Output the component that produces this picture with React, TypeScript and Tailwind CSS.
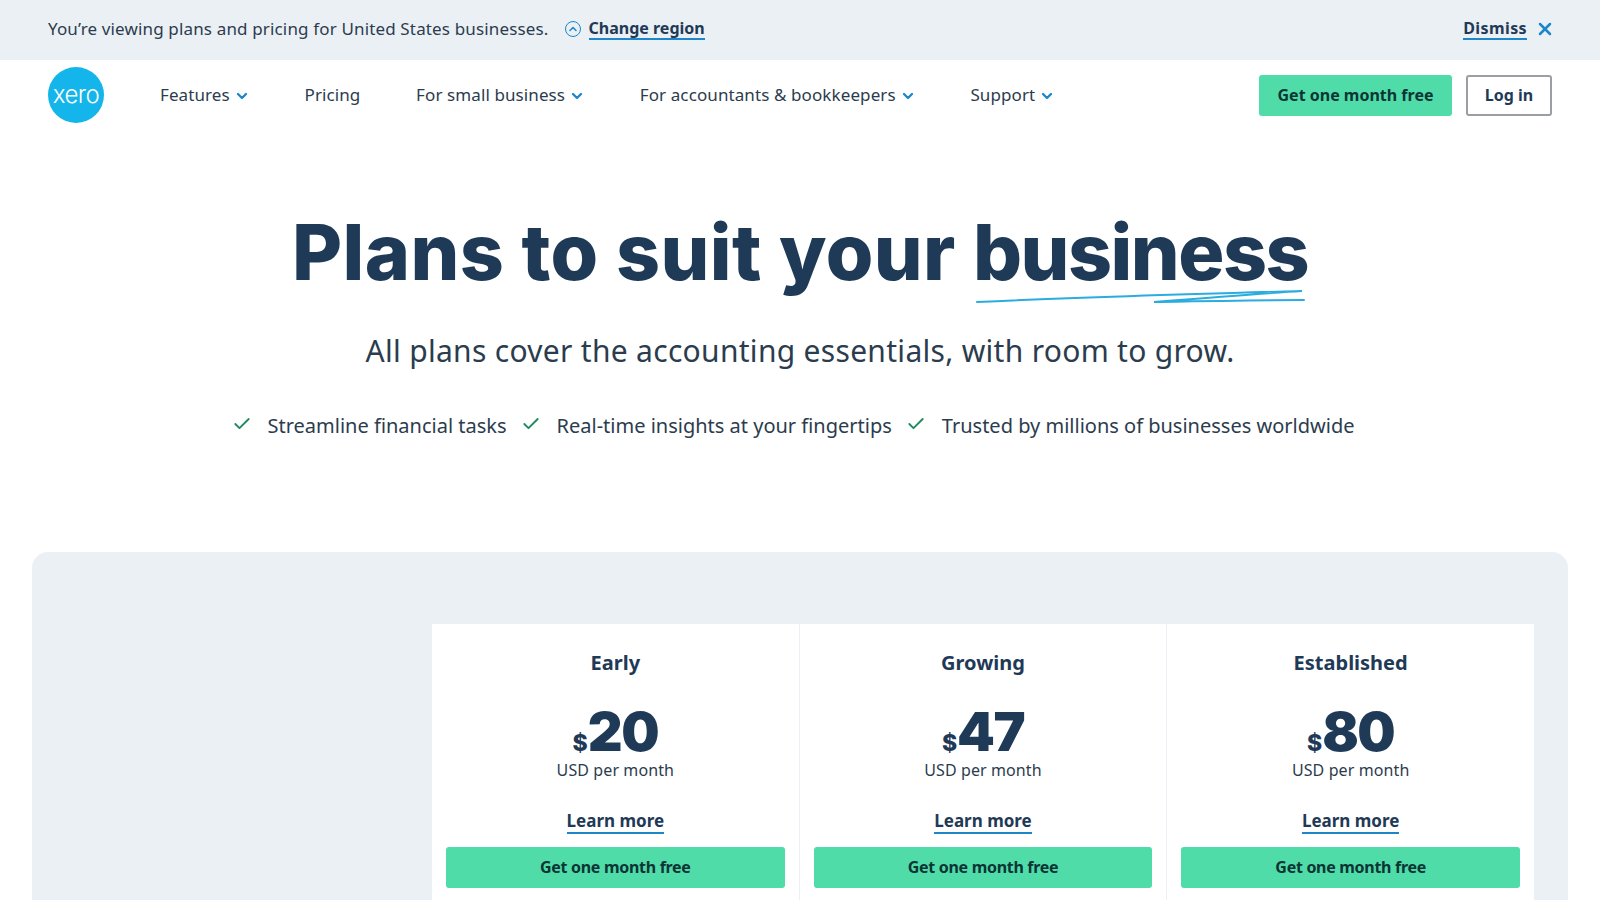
import { ChevronDown, ChevronUp, Check, X } from "lucide-react";

const navItems = [
  { label: "Features", menu: true },
  { label: "Pricing", menu: false },
  { label: "For small business", menu: true },
  { label: "For accountants & bookkeepers", menu: true },
  { label: "Support", menu: true },
];

const perks = [
  "Streamline financial tasks",
  "Real-time insights at your fingertips",
  "Trusted by millions of businesses worldwide",
];

const plans = [
  { name: "Early", price: "20" },
  { name: "Growing", price: "47" },
  { name: "Established", price: "80" },
];

const Underlined = ({ children }: { children: string }) => (
  <a className="font-bold text-[#1f3a57] border-b-2 border-[#1c86c8] leading-[19px]">{children}</a>
);

const App = () => {
  return (
    <div className="h-screen overflow-hidden bg-white text-[#2b3c4e] font-['Noto_Sans',sans-serif] flex flex-col">
      {/* Region banner */}
      <div className="h-[60px] shrink-0 bg-[#ebf0f5] px-[48px] pb-[2px] flex items-center justify-between text-[16px]">
        <div className="flex items-center">
          <span className="text-[17px] tracking-[0.15px]">You’re viewing plans and pricing for United States businesses.</span>
          <span className="ml-[16px] mr-2 w-4 h-4 rounded-full border-[1.5px] border-[#1c86c8] flex items-center justify-center">
            <ChevronUp size={12} strokeWidth={3} className="text-[#1c86c8]" />
          </span>
          <Underlined>Change region</Underlined>
        </div>
        <div className="flex items-center gap-2 tracking-[0.4px]">
          <Underlined>Dismiss</Underlined>
          <X size={20} strokeWidth={3} className="text-[#1c86c8] -mr-[3px]" />
        </div>
      </div>

      {/* Nav */}
      <div className="h-[71px] shrink-0 px-[48px] flex items-start justify-between">
        <div className="flex items-center h-[71px]">
          <div className="w-[56px] h-[56px] -mt-[1px] rounded-full bg-[#13b5ea] flex items-center justify-center text-white text-[24px] font-light font-['Inter',sans-serif] tracking-[-0.5px]">
            xero
          </div>
          <div className="flex items-center gap-[55.7px] ml-[56px] pb-[2px] text-[17px] tracking-[0.1px]">
            {navItems.map((item) => (
              <div key={item.label} className="flex items-center gap-[4px]">
                <span>{item.label}</span>
                {item.menu && <ChevronDown size={16} strokeWidth={3.5} className="text-[#1c86c8] mt-[3px] -mr-[1px]" />}
              </div>
            ))}
          </div>
        </div>
        <div className="flex items-center gap-[14px] h-[71px] text-[16px] font-bold">
          <button className="w-[193px] h-[41px] pb-[2px] rounded-[3px] bg-[#50dca9] text-[#0b3534]">Get one month free</button>
          <button className="w-[86px] h-[41px] pb-[2px] rounded-[3px] border-2 border-[#9b9fa4] text-[#1f3a57]">Log in</button>
        </div>
      </div>

      {/* Hero */}
      <div className="flex flex-col items-center">
        <h1 className="mt-[76px] text-[77px] leading-[90px] font-extrabold tracking-[0.4px] text-[#1f3a57] font-['Inter',sans-serif] relative">
          Plans to suit your{" "}
          <span className="relative tracking-[-1.55px]">
            business
            <svg
              className="absolute left-[3px] top-[85px]"
              width="330"
              height="14"
              viewBox="0 0 330 14"
              fill="none"
              stroke="#2bacdf"
              strokeLinecap="round"
            >
              <path d="M1 12 C 110 7, 220 4, 326 1 C 290 3, 215 9, 178 12 C 230 11, 280 10, 328 10" strokeWidth="2" />
            </svg>
          </span>
        </h1>
        <p className="mt-[34px] text-[30px] leading-[40px] tracking-[0.3px]">
          All plans cover the accounting essentials, with room to grow.
        </p>
        <div className="mt-[41px] flex items-center text-[20px] leading-[28px]">
          {perks.map((perk) => (
            <div key={perk} className="flex items-center mr-[14px]">
              <Check size={20} strokeWidth={2.25} className="text-[#1f8a5f] mr-[16px] -mt-1" />
              <span>{perk}</span>
            </div>
          ))}
        </div>
      </div>

      {/* Plans panel */}
      <div className="mt-[112px] mx-[32px] flex-1 rounded-t-[16px] bg-[#ebf0f5] pt-[72px] pl-[400px] pr-[34px]">
        <div className="grid grid-cols-3 gap-px h-full">
          {plans.map((plan) => (
            <div key={plan.name} className="bg-white px-[14px] pt-[25px] flex flex-col items-center">
              <div className="text-[20px] leading-[28px] font-bold text-[#1f3a57]">{plan.name}</div>
              <div className="mt-[30px] flex items-baseline font-['Inter',sans-serif] text-[#1f3a57] font-black">
                <span className="text-[23px] leading-[30px] font-extrabold">$</span>
                <span className="text-[54px] leading-[50px] tracking-[-1.5px]">{plan.price}</span>
              </div>
              <div className="text-[16px] leading-[24px] tracking-[0.1px]">USD per month</div>
              <div className="mt-[28px] text-[17px] leading-[22px]">
                <Underlined>Learn more</Underlined>
              </div>
              <button className="mt-[15px] w-full h-[41px] pb-[1px] shrink-0 rounded-[3px] bg-[#50dca9] text-[#0b3534] text-[16px] font-bold tracking-[-0.3px]">
                Get one month free
              </button>
            </div>
          ))}
        </div>
      </div>
    </div>
  );
};

export default App;
